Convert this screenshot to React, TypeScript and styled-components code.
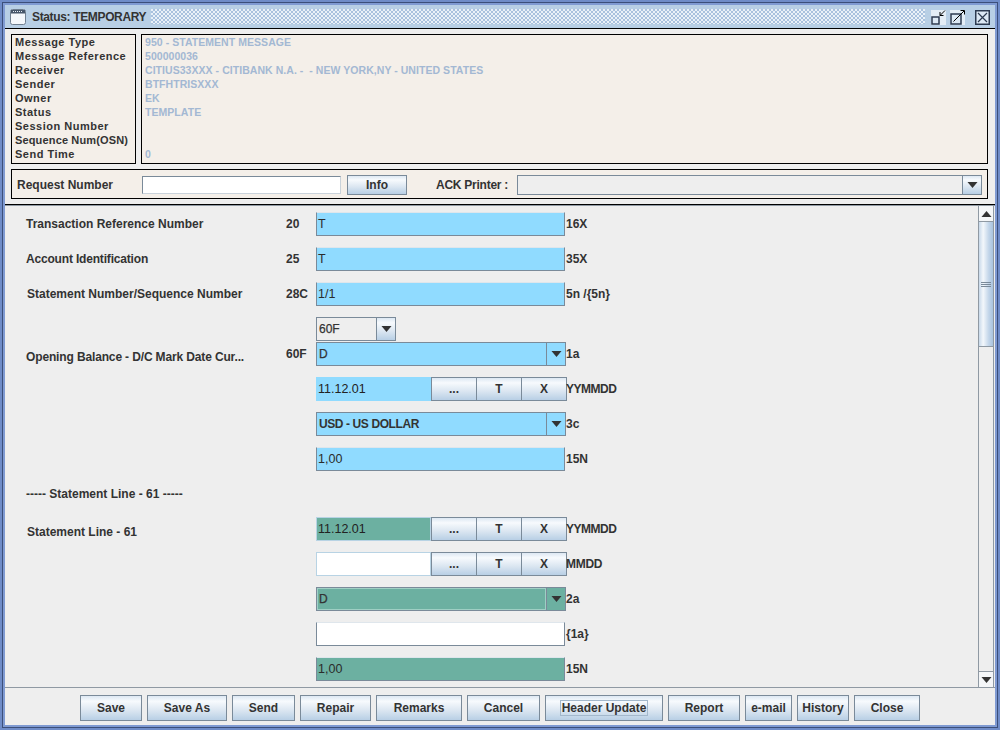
import styled, { createGlobalStyle } from 'styled-components'

const Global = createGlobalStyle`
  html, body {
    margin: 0;
    padding: 0;
    background: #6f8cc8;
  }
  * {
    box-sizing: border-box;
  }
  body {
    font-family: "Liberation Sans", Arial, sans-serif;
    font-size: 12px;
    font-weight: bold;
    color: #333;
  }
`

const oceanGradient = 'linear-gradient(180deg, #dde8f3 0%, #f7fafd 22%, #dbe6f1 60%, #b8cfe5 100%)'

const Frame = styled.div`
  width: 1000px;
  height: 730px;
  padding: 2px;
  background: #6f8cc8;
  overflow: hidden;
`

const FrameLine = styled.div`
  height: 100%;
  padding: 2px;
  border: 1px solid #3c4f7a;
  background: #7f9ad2;
`

const Window = styled.div`
  display: flex;
  flex-direction: column;
  height: 100%;
  background: #eee;
`

const TitleBar = styled.div`
  display: flex;
  align-items: center;
  flex: 0 0 24px;
  padding: 0 5px;
  background: #b8cfe5;
  border-bottom: 1px solid #000;
`

const TitleText = styled.span`
  margin-left: 6px;
  letter-spacing: -0.35px;
  white-space: nowrap;
  color: #333;
`

const TitleDots = styled.div`
  flex: 1;
  height: 15px;
  margin: 0 6px 0 5px;
  background-color: #a9c1de;
  background-image:
    radial-gradient(circle at 1px 1px, #eaf1f8 0.9px, transparent 1px),
    radial-gradient(circle at 3px 3px, #eaf1f8 0.9px, transparent 1px);
  background-size: 4px 4px;
`

const WinButton = styled.span<{ $gap?: number }>`
  display: flex;
  flex: 0 0 15px;
  margin-left: ${p => p.$gap ?? 0}px;
`

const Header = styled.div`
  display: flex;
  flex-direction: column;
  gap: 5px;
  padding: 5px 7px 5px 6px;
  border-bottom: 1px solid #000;
`

const InfoRow = styled.div`
  display: flex;
  gap: 5px;
`

const InfoBox = styled.div<{ $grow?: boolean }>`
  flex: ${p => (p.$grow ? '1' : '0 0 125px')};
  min-width: 0;
  height: 130px;
  padding: 0 3px;
  border: 1px solid #000;
  background: #f4efe9;
`

const InfoLine = styled.div<{ $spacing?: number }>`
  height: 14px;
  line-height: 14px;
  font-size: 11px;
  letter-spacing: ${p => p.$spacing ?? 0.5}px;
  white-space: pre;
  color: #333;
`

const InfoValue = styled(InfoLine)`
  font-size: 10.5px;
  letter-spacing: 0.05px;
  color: #a3b8d3;
`

const RequestBar = styled.div`
  display: flex;
  align-items: center;
  height: 30px;
  padding: 2px 5px 0;
  border: 1px solid #000;
  background: #f4efe9;
`

const RequestLabel = styled.span`
  flex: 0 0 125px;
`

const RequestInput = styled.div`
  flex: 0 0 199px;
  height: 18px;
  border: 1px solid #7a8a99;
  border-right-color: #c9d2da;
  border-bottom-color: #c9d2da;
  background: #fff;
`

const AckLabel = styled.span`
  flex: 0 0 81px;
  margin-left: 29px;
  letter-spacing: -0.25px;
  white-space: nowrap;
`

const ActionButton = styled.button<{ $width: number; $height?: number; $overlap?: boolean }>`
  display: flex;
  align-items: center;
  justify-content: center;
  flex: 0 0 ${p => p.$width}px;
  width: ${p => p.$width}px;
  height: ${p => p.$height ?? 24}px;
  margin: 0 0 0 ${p => (p.$overlap ? -1 : 0)}px;
  padding: 0;
  border: 1px solid #7a8a99;
  background: ${oceanGradient};
  font: inherit;
  color: #333;
`

const InfoButton = styled(ActionButton)`
  margin-left: 6px;
`

const Combo = styled.div<{ $fill?: string; $height?: number; $width?: number }>`
  display: flex;
  align-items: stretch;
  width: ${p => (p.$width ? `${p.$width}px` : 'auto')};
  flex: ${p => (p.$width ? `0 0 ${p.$width}px` : '1')};
  height: ${p => p.$height ?? 24}px;
  border: 1px solid #7a8a99;
  background: ${p => p.$fill ?? '#eee'};
`

const ComboValue = styled.span<{ $medium?: boolean; $ring?: boolean }>`
  flex: 1;
  padding-left: 2px;
  line-height: 22px;
  white-space: nowrap;
  letter-spacing: -0.4px;
  ${p => p.$medium && 'font-weight: normal; letter-spacing: 0; -webkit-text-stroke: 0.25px #333;'}
  ${p => p.$ring && 'box-shadow: inset 0 0 0 1px #9fcfc4;'}
`

const ComboArrow = styled.span<{ $flat?: boolean; $fill?: string }>`
  display: flex;
  align-items: center;
  justify-content: center;
  flex: 0 0 19px;
  border-left: 1px solid #7a8a99;
  background: ${p => (p.$flat ? p.$fill : oceanGradient)};
`

const Body = styled.div`
  display: flex;
  flex: 1;
  min-height: 0;
  border-top: 1px solid #8f99a3;
`

const Form = styled.div`
  flex: 1;
  overflow: hidden;
  padding: 6px 0 0 21px;
`

const Row = styled.div<{ $gap?: number }>`
  display: grid;
  grid-template-columns: 260px 30px 250px auto;
  align-items: center;
  height: 24px;
  margin-top: ${p => p.$gap ?? 11}px;
  &:first-child {
    margin-top: 0;
  }
`

const Label = styled.span<{ $indent?: number; $drop?: number; $squeeze?: number }>`
  padding-left: ${p => p.$indent ?? 0}px;
  padding-top: ${p => p.$drop ?? 0}px;
  letter-spacing: ${p => p.$squeeze ?? 0}px;
  white-space: nowrap;
`

const Tag = styled.span`
  font-weight: bold;
`

const Suffix = styled.span<{ $squeeze?: number }>`
  grid-column: 4;
  letter-spacing: ${p => p.$squeeze ?? 0}px;
  white-space: nowrap;
`

const FieldSlot = styled.div`
  display: flex;
  grid-column: 3;
`

const Field = styled.div<{ $fill: string }>`
  flex: 0 0 249px;
  height: 24px;
  padding-left: 1px;
  line-height: 22px;
  font-size: 12.5px;
  font-weight: normal;
  color: #2b2b2b;
  background: ${p => p.$fill};
  border: 1px solid #dfe6ec;
  border-left-color: #7a8a99;
  border-bottom-color: #7a8a99;
  border-right-color: #7a8a99;
`

const DateInput = styled.div<{ $fill: string; $edge?: string }>`
  flex: 0 0 115px;
  height: 24px;
  padding-left: 1px;
  line-height: 22px;
  font-size: 12.5px;
  font-weight: normal;
  color: #222;
  background: ${p => p.$fill};
  border: 1px solid ${p => p.$edge ?? p.$fill};
`

const Scrollbar = styled.div`
  display: flex;
  flex-direction: column;
  flex: 0 0 16px;
  margin-right: 1px;
  border-left: 1px solid #8f99a3;
  border-right: 1px solid #8f99a3;
  background: #eee;
`

const ScrollButton = styled.div`
  display: flex;
  align-items: center;
  justify-content: center;
  flex: 0 0 16px;
  border-bottom: 1px solid #8f99a3;
  background: #f4f6f8;
`

const ScrollButtonEnd = styled(ScrollButton)`
  border-top: 1px solid #8f99a3;
  border-bottom: none;
`

const ScrollTrack = styled.div`
  flex: 1;
`

const ScrollThumb = styled.div`
  display: flex;
  align-items: center;
  justify-content: center;
  height: 125px;
  border-bottom: 1px solid #8f99a3;
  background: linear-gradient(90deg, #c8d9ea 0%, #f3f7fb 30%, #c2d5e9 70%, #a9c3de 100%);
`

const Grip = styled.span`
  display: block;
  width: 10px;
  height: 5px;
  border-top: 1px solid #7a8a99;
  border-bottom: 1px solid #7a8a99;
  background: linear-gradient(180deg, transparent 40%, #7a8a99 40%, #7a8a99 60%, transparent 60%);
`

const Footer = styled.div`
  display: flex;
  align-items: center;
  justify-content: center;
  gap: 5px;
  flex: 0 0 38px;
  padding-top: 2px;
  border-top: 1px solid #8f99a3;
`

const FocusRing = styled.span`
  padding: 0 1px;
  line-height: 14px;
  border: 1px solid #a3b8cc;
`

const Arrow = ({ up }: { up?: boolean }) => (
  <svg width="11" height="6" viewBox="0 0 10 6">
    <path d={up ? 'M5 0 L10 6 L0 6 Z' : 'M0 0 L10 0 L5 6 Z'} fill="#333" />
  </svg>
)

const WindowIcon = () => (
  <svg width="16" height="16" viewBox="0 0 16 16">
    <rect x="0.5" y="0.5" width="15" height="15" rx="2" fill="#f4f7fb" stroke="#6f7f90" />
    <rect x="1" y="1" width="14" height="3.5" fill="#47566a" />
    <path d="M3 2.5h1M5 2.5h1M7 2.5h1M9 2.5h1M11 2.5h1" stroke="#e6edf5" />
  </svg>
)

const MinimizeIcon = () => (
  <svg width="15" height="16" viewBox="0 0 15 16">
    <rect x="0" y="1" width="15" height="15" fill="#e4edf6" />
    <rect x="1" y="8" width="7" height="7" fill="#dce8f4" stroke="#2c3a50" strokeWidth="1.5" />
    <path d="M14 1.5 L9 6.5 M9 3 V6.5 H12.5" stroke="#000" fill="none" />
  </svg>
)

const MaximizeIcon = () => (
  <svg width="15" height="16" viewBox="0 0 15 16">
    <rect x="0" y="1" width="15" height="15" fill="#e4edf6" />
    <rect x="1" y="5" width="10" height="10" fill="#dce8f4" stroke="#2c3a50" strokeWidth="1.5" />
    <path d="M3.5 12.5 L14 2 M10.5 1.5 H14.5 V5.5" stroke="#000" fill="none" />
  </svg>
)

const CloseIcon = () => (
  <svg width="15" height="16" viewBox="0 0 15 16">
    <rect x="0.75" y="1.75" width="13.5" height="13.5" fill="#dce8f4" stroke="#2c3a50" strokeWidth="1.5" />
    <path d="M3 4 L12 13 M12 4 L3 13" stroke="#2c3a50" strokeWidth="1.2" />
  </svg>
)

const BLUE = '#90dbff'
const GREEN = '#6cb0a1'
const WHITE = '#fff'
const EDGE = '#b8d3e4'

const infoLabels: [string, number?][] = [
  ['Message Type'],
  ['Message Reference'],
  ['Receiver'],
  ['Sender'],
  ['Owner'],
  ['Status'],
  ['Session Number'],
  ['Sequence Num(OSN)', 0.15],
  ['Send Time'],
]

const infoValues = [
  '950 - STATEMENT MESSAGE',
  '500000036',
  'CITIUS33XXX - CITIBANK N.A. -  - NEW YORK,NY - UNITED STATES',
  'BTFHTRISXXX',
  'EK',
  'TEMPLATE',
  ' ',
  ' ',
  '0',
]

const footerButtons: [string, number][] = [
  ['Save', 62],
  ['Save As', 80],
  ['Send', 63],
  ['Repair', 71],
  ['Remarks', 86],
  ['Cancel', 73],
  ['Header Update', 118],
  ['Report', 72],
  ['e-mail', 47],
  ['History', 52],
  ['Close', 66],
]

function DateField({ value, fill, edge }: { value: string; fill: string; edge?: string }) {
  return (
    <FieldSlot>
      <DateInput $fill={fill} $edge={edge}>
        {value}
      </DateInput>
      <ActionButton $width={46}>...</ActionButton>
      <ActionButton $width={46} $overlap>
        T
      </ActionButton>
      <ActionButton $width={46} $overlap>
        X
      </ActionButton>
    </FieldSlot>
  )
}

function FieldCombo({
  value,
  fill,
  medium,
  ring,
}: {
  value: string
  fill: string
  medium?: boolean
  ring?: boolean
}) {
  return (
    <FieldSlot>
      <Combo $fill={fill}>
        <ComboValue $medium={medium} $ring={ring}>
          {value}
        </ComboValue>
        <ComboArrow $flat $fill={fill}>
          <Arrow />
        </ComboArrow>
      </Combo>
    </FieldSlot>
  )
}

function App() {
  return (
    <Frame>
      <Global />
      <FrameLine>
        <Window>
          <TitleBar>
            <WindowIcon />
            <TitleText>Status: TEMPORARY</TitleText>
            <TitleDots />
            <WinButton>
              <MinimizeIcon />
            </WinButton>
            <WinButton $gap={4}>
              <MaximizeIcon />
            </WinButton>
            <WinButton $gap={10}>
              <CloseIcon />
            </WinButton>
          </TitleBar>

          <Header>
            <InfoRow>
              <InfoBox>
                {infoLabels.map(([label, spacing]) => (
                  <InfoLine key={label} $spacing={spacing}>
                    {label}
                  </InfoLine>
                ))}
              </InfoBox>
              <InfoBox $grow>
                {infoValues.map((value, i) => (
                  <InfoValue key={i}>{value}</InfoValue>
                ))}
              </InfoBox>
            </InfoRow>
            <RequestBar>
              <RequestLabel>Request Number</RequestLabel>
              <RequestInput />
              <InfoButton $width={60} $height={20}>
                Info
              </InfoButton>
              <AckLabel>ACK Printer :</AckLabel>
              <Combo $height={20}>
                <ComboValue />
                <ComboArrow>
                  <Arrow />
                </ComboArrow>
              </Combo>
            </RequestBar>
          </Header>

          <Body>
            <Form>
              <Row>
                <Label>Transaction Reference Number</Label>
                <Tag>20</Tag>
                <FieldSlot>
                  <Field $fill={BLUE}>T</Field>
                </FieldSlot>
                <Suffix>16X</Suffix>
              </Row>
              <Row>
                <Label $squeeze={-0.18}>Account Identification</Label>
                <Tag>25</Tag>
                <FieldSlot>
                  <Field $fill={BLUE}>T</Field>
                </FieldSlot>
                <Suffix>35X</Suffix>
              </Row>
              <Row>
                <Label $indent={1}>Statement Number/Sequence Number</Label>
                <Tag>28C</Tag>
                <FieldSlot>
                  <Field $fill={BLUE}>1/1</Field>
                </FieldSlot>
                <Suffix>5n /{'{5n}'}</Suffix>
              </Row>
              <Row>
                <FieldSlot>
                  <Combo $width={80}>
                    <ComboValue $medium>60F</ComboValue>
                    <ComboArrow>
                      <Arrow />
                    </ComboArrow>
                  </Combo>
                </FieldSlot>
              </Row>
              <Row $gap={1}>
                <Label $drop={5} $squeeze={-0.14}>
                  Opening Balance - D/C Mark Date Cur...
                </Label>
                <Tag>60F</Tag>
                <FieldCombo value="D" fill={BLUE} medium />
                <Suffix>1a</Suffix>
              </Row>
              <Row>
                <DateField value="11.12.01" fill={BLUE} />
                <Suffix $squeeze={-0.5}>YYMMDD</Suffix>
              </Row>
              <Row>
                <FieldCombo value="USD - US DOLLAR" fill={BLUE} />
                <Suffix>3c</Suffix>
              </Row>
              <Row>
                <FieldSlot>
                  <Field $fill={BLUE}>1,00</Field>
                </FieldSlot>
                <Suffix>15N</Suffix>
              </Row>
              <Row>
                <Label>----- Statement Line - 61 -----</Label>
              </Row>
              <Row>
                <Label $indent={1} $drop={6}>
                  Statement Line - 61
                </Label>
                <DateField value="11.12.01" fill={GREEN} edge={EDGE} />
                <Suffix $squeeze={-0.5}>YYMMDD</Suffix>
              </Row>
              <Row>
                <DateField value="" fill={WHITE} edge={EDGE} />
                <Suffix $squeeze={-0.3}>MMDD</Suffix>
              </Row>
              <Row>
                <FieldCombo value="D" fill={GREEN} medium ring />
                <Suffix>2a</Suffix>
              </Row>
              <Row>
                <FieldSlot>
                  <Field $fill={WHITE} />
                </FieldSlot>
                <Suffix>{'{1a}'}</Suffix>
              </Row>
              <Row>
                <FieldSlot>
                  <Field $fill={GREEN}>1,00</Field>
                </FieldSlot>
                <Suffix>15N</Suffix>
              </Row>
            </Form>

            <Scrollbar>
              <ScrollButton>
                <Arrow up />
              </ScrollButton>
              <ScrollThumb>
                <Grip />
              </ScrollThumb>
              <ScrollTrack />
              <ScrollButtonEnd>
                <Arrow />
              </ScrollButtonEnd>
            </Scrollbar>
          </Body>

          <Footer>
            {footerButtons.map(([text, width]) => (
              <ActionButton key={text} $width={width} $height={26}>
                {text === 'Header Update' ? <FocusRing>{text}</FocusRing> : text}
              </ActionButton>
            ))}
          </Footer>
        </Window>
      </FrameLine>
    </Frame>
  )
}

export default App
